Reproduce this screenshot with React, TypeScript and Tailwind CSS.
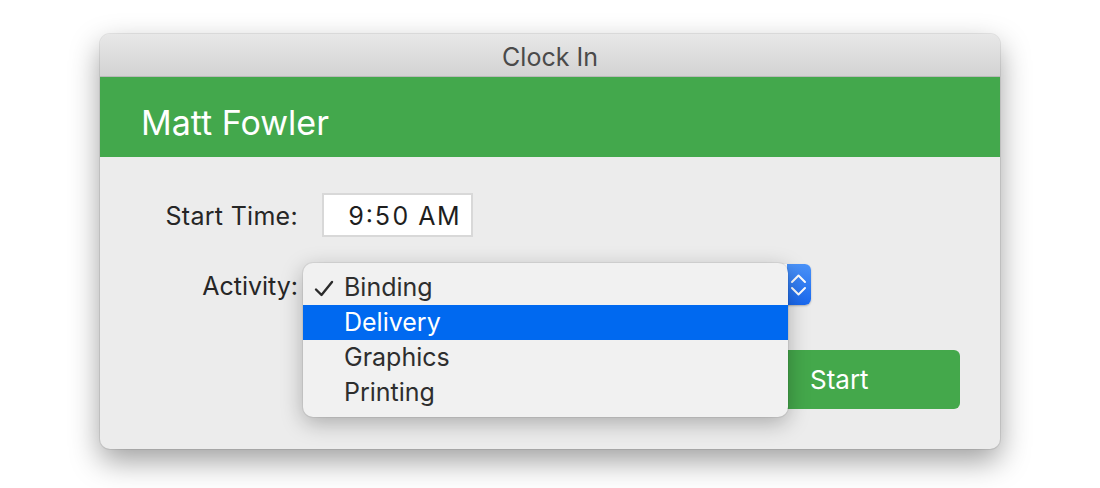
const items = ["Binding", "Delivery", "Graphics", "Printing"]

function CheckMark() {
  return (
    <svg width="20" height="17" viewBox="0 0 20 17" className="absolute left-[11px] top-[10px]">
      <path d="M2 9.5 L7.5 15 L18 2" fill="none" stroke="#2b2b2b" strokeWidth="2.4" strokeLinecap="round" strokeLinejoin="round" />
    </svg>
  )
}

function Stepper() {
  return (
    <svg width="24" height="41" viewBox="0 0 24 41">
      <path d="M5 18 L11.5 11.5 L18 18" fill="none" stroke="white" strokeWidth="2" strokeLinecap="round" strokeLinejoin="round" />
      <path d="M5 24 L11.5 30.5 L18 24" fill="none" stroke="white" strokeWidth="2" strokeLinecap="round" strokeLinejoin="round" />
    </svg>
  )
}

function ActivityMenu() {
  return (
    <div className="absolute left-[-19px] top-[-1px] w-[485px] rounded-[10px] bg-[#f1f1f1] py-[7px] shadow-[0_6px_22px_rgba(0,0,0,0.28),0_0_0_1px_rgba(0,0,0,0.06)]">
      {items.map((item, i) => (
        <div
          key={item}
          className={
            i === 1
              ? "relative flex h-[35px] items-center bg-[#0069f0] pl-[41px] text-white"
              : "relative flex h-[35px] items-center pl-[41px] text-[#2e2e2e]"
          }
        >
          {i === 0 ? <CheckMark /> : null}
          <span className="text-[25px] leading-none">{item}</span>
        </div>
      ))}
    </div>
  )
}

export default function App() {
  return (
    <div className="min-h-[488px] w-full bg-white pt-[34px] font-['Inter','Liberation_Sans',sans-serif]">
      <div className="mx-auto w-[900px] rounded-[10px] bg-[#ececec] shadow-[0_12px_30px_rgba(0,0,0,0.38),0_0_0_1px_rgba(0,0,0,0.08)]">
        {/* title bar */}
        <div className="flex h-[43px] items-center justify-center rounded-t-[10px] border-b border-[#b9b9b9] bg-gradient-to-b from-[#e8e8e8] to-[#d3d3d3] pt-[4px]">
          <span className="text-[25px] leading-none text-[#4a4a4a]">Clock In</span>
        </div>

        {/* header */}
        <div className="flex h-[80px] items-center bg-[#43a84c] pl-[41px] pt-[12px]">
          <span className="text-[34px] leading-none text-white">Matt Fowler</span>
        </div>

        {/* body */}
        <div className="px-[40px] pb-[40px] pt-[36px]">
          <div className="grid grid-cols-[158px_1fr] items-center gap-x-[24px]">
            <span className="pt-[3px] text-right text-[25px] tracking-[0.3px] leading-none text-[#262626]">Start Time:</span>
            <div className="flex h-[44px] w-[151px] items-center justify-end border-2 border-[#d8d8d8] bg-white pr-[10px] pt-[2px]">
              <span className="text-[25px] leading-none tabular-nums tracking-[1.5px] text-[#1e1e1e]">9∶50 AM</span>
            </div>

            <span className="mt-[27px] pt-[3px] text-right text-[25px] leading-none text-[#262626]">Activity:</span>
            <div className="relative mt-[27px] h-[41px] w-[489px] rounded-[6px] bg-white shadow-[0_1px_2px_rgba(0,0,0,0.25)]">
              <div className="absolute right-0 top-0 flex h-[41px] w-[24px] items-center justify-center rounded-r-[6px] bg-gradient-to-b from-[#4a92f8] to-[#1868ef]">
                <Stepper />
              </div>
              <ActivityMenu />
            </div>
          </div>

          <div className="mt-[45px] flex justify-end">
            <button
              type="button"
              className="flex h-[59px] w-[260px] items-center rounded-[6px] bg-[#44a84b] pl-[110px] text-[26px] leading-none text-white"
            >
              Start
            </button>
          </div>
        </div>
      </div>
    </div>
  )
}
